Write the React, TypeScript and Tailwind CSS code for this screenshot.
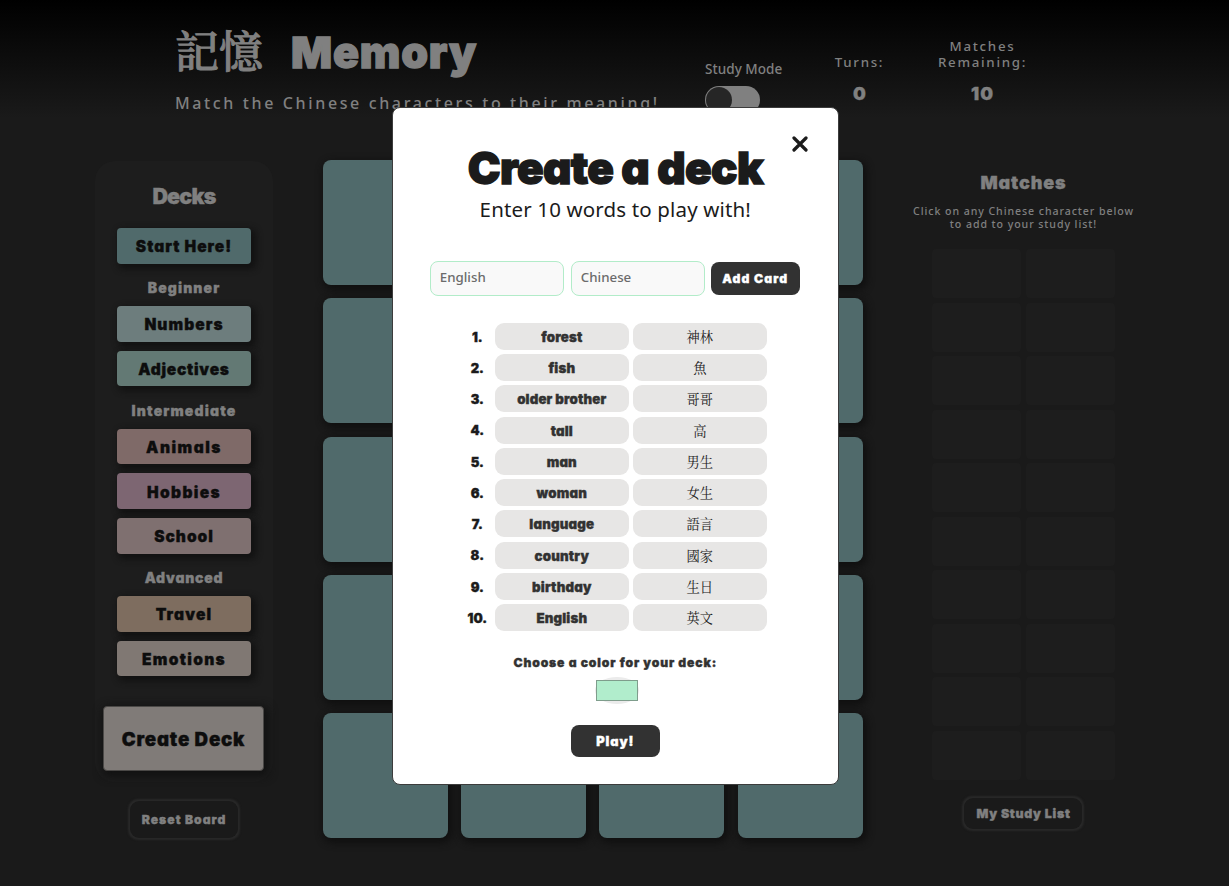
import React from "react";

const heavy =
  "font-['Inter','Noto_Sans_CJK_TC',sans-serif] font-black [font-feature-settings:'cv11'] [-webkit-text-stroke:0.35px_currentColor] whitespace-nowrap";
const round = "font-['Noto_Sans','Noto_Sans_CJK_TC',sans-serif] font-medium";

type Deck = { name: string; cls: string };
const groups: { label: string; labelCls: string; decks: Deck[] }[] = [
  {
    label: "Beginner",
    labelCls: "tracking-[1.1px]",
    decks: [
      { name: "Numbers", cls: "bg-[#6d7d7d] tracking-[1.05px]" },
      { name: "Adjectives", cls: "bg-[#637974] tracking-[0.75px]" },
    ],
  },
  {
    label: "Intermediate",
    labelCls: "tracking-[1.15px]",
    decks: [
      { name: "Animals", cls: "bg-[#7f6a68] tracking-[1.5px]" },
      { name: "Hobbies", cls: "bg-[#7d6672] tracking-[1.4px]" },
      { name: "School", cls: "bg-[#7f7070] tracking-[1px]" },
    ],
  },
  {
    label: "Advanced",
    labelCls: "tracking-[0.75px]",
    decks: [
      { name: "Travel", cls: "bg-[#7e6d5f] tracking-[1.2px]" },
      { name: "Emotions", cls: "bg-[#807873] tracking-[1.3px]" },
    ],
  },
];

const words: [string, string][] = [
  ["forest", "神林"],
  ["fish", "魚"],
  ["older brother", "哥哥"],
  ["tall", "高"],
  ["man", "男生"],
  ["woman", "女生"],
  ["language", "語言"],
  ["country", "國家"],
  ["birthday", "生日"],
  ["English", "英文"],
];

function DeckButton({ name, cls }: Deck) {
  return (
    <button
      className={`${heavy} ${cls} flex h-[35.7px] w-[134px] items-center justify-center rounded-[4px] pt-[2px] text-[15.5px] text-[#0d0d0d] shadow-[3px_3px_6px_2px_#121212]`}
    >
      {name}
    </button>
  );
}

function Header() {
  return (
    <header className="flex h-[160px] pl-[175px] text-[#808080]">
      <div className="w-[530px] pt-[20px]">
        <h1 className="flex h-[64px] items-center whitespace-nowrap">
          <span className="w-[116px] pb-[6px] font-['Noto_Serif_CJK_TC','Noto_Sans_CJK_TC',serif] text-[44px] font-medium leading-none [-webkit-text-stroke:1px_#808080]">
            記憶
          </span>
          <span className={`${heavy} text-[43px] leading-none tracking-[0.8px] [-webkit-text-stroke:1.3px_#808080]`}>
            Memory
          </span>
        </h1>
        <p className={`${round} mt-[7px] whitespace-nowrap text-[16px] leading-[24px] tracking-[2.63px]`}>
          Match the Chinese characters to their meaning!
        </p>
      </div>
      <div className="w-[78px] pt-[59px]">
        <div className={`${round} whitespace-nowrap text-[13.5px] leading-[20px] tracking-[0.05px]`}>Study Mode</div>
        <div className="mt-[7px] h-[28px] w-[55px] rounded-full bg-[#808080] p-px">
          <div className="size-[26px] rounded-full bg-[#262626]" />
        </div>
      </div>
      <div className="w-[153px] pt-[54px] text-center">
        <div className={`${round} text-[13.3px] leading-[16px] tracking-[1.7px]`}>Turns:</div>
        <div className={`${heavy} mt-[14px] text-[18px] leading-[20px]`}>0</div>
      </div>
      <div className="w-[93px] pt-[38px] text-center">
        <div className={`${round} text-[13.3px] leading-[16px] tracking-[1.7px]`}>
          Matches
          <br />
          Remaining:
        </div>
        <div className={`${heavy} mt-[14px] text-[18px] leading-[20px] tracking-[1px]`}>10</div>
      </div>
    </header>
  );
}

function Sidebar() {
  return (
    <aside className="flex w-[178px] flex-col items-center">
      <div className="mt-px flex h-[621px] w-full flex-col items-center rounded-[20px] bg-[#1d1d1d]">
        <h2 className={`${heavy} flex h-[67px] shrink-0 items-center pt-[4px] text-[21.5px] tracking-[-0.8px] text-[#808080]`}>
          Decks
        </h2>
        <DeckButton name="Start Here!" cls="bg-[#506a6b] tracking-[1px]" />
        {groups.map((g) => (
          <React.Fragment key={g.label}>
            <h3
              className={`${heavy} ${g.labelCls} flex h-[42.3px] shrink-0 items-center pt-[5.5px] text-[14px] text-[#808080]`}
            >
              {g.label}
            </h3>
            <div className="flex flex-col gap-[9px]">
              {g.decks.map((d) => (
                <DeckButton key={d.name} {...d} />
              ))}
            </div>
          </React.Fragment>
        ))}
        <button
          className={`${heavy} mt-[30px] mr-px flex h-[65px] w-[161px] shrink-0 items-center justify-center rounded-[4px] border border-[#4a4846] bg-[#807b78] pt-[2px] text-[18.7px] tracking-[0.8px] text-[#0d0d0d] shadow-[2px_3px_8px_3px_#121212]`}
        >
          Create Deck
        </button>
      </div>
      <button
        className={`${heavy} mt-[19px] flex h-[37px] w-[108px] items-center justify-center rounded-[9px] pt-[2px] text-[12.2px] tracking-[1px] text-[#808080] shadow-[0_0_2px_1.5px_#292929]`}
      >
        Reset Board
      </button>
    </aside>
  );
}

function Matches() {
  return (
    <section className="ml-[40.4px] flex w-[241px] flex-col items-center text-[#808080]">
      <h2 className={`${heavy} mt-[11px] text-[18px] leading-[24px] tracking-[0.9px]`}>Matches</h2>
      <p className={`${round} mt-[10px] whitespace-nowrap text-center text-[10.6px] leading-[13px] tracking-[0.93px]`}>
        Click on any Chinese character below
        <br />
        to add to your study list!
      </p>
      <div className="mt-[18px] grid grid-cols-[89px_89px] gap-x-[5px] gap-y-[4.5px]">
        {Array.from({ length: 20 }, (_, i) => (
          <div key={i} className="h-[49px] rounded-[4px] bg-[#1d1d1d]" />
        ))}
      </div>
      <button
        className={`${heavy} mt-[18px] flex h-[31px] w-[118px] items-center justify-center rounded-[9px] pt-[2px] text-[12.4px] tracking-[0.7px] shadow-[0_0_2px_1.5px_#292929]`}
      >
        My Study List
      </button>
    </section>
  );
}

function Modal() {
  const field =
    "h-[35px] w-[134px] rounded-[8px] border border-[#b2ecc9] bg-[#f9f9f9] pb-[3px] pl-[9px] text-[13.3px] placeholder:text-[#6b6b6b] placeholder:opacity-100";
  return (
    <div className="absolute left-[392px] top-[107px] flex h-[678px] w-[446.6px] flex-col items-center rounded-[8px] border border-[#3c3c3c] bg-white text-[#1b1b1b]">
      <button aria-label="Close" className="absolute right-[30px] top-[28px]">
        <svg width="16" height="16" viewBox="0 0 16 16" fill="none" stroke="#1b1b1b" strokeWidth="3.2" strokeLinecap="round">
          <path d="M2 2 14 14M14 2 2 14" />
        </svg>
      </button>
      <h2
        className={`${heavy} mt-[35px] text-[44px] leading-[50px] tracking-[-0.65px] [-webkit-text-stroke:1.4px_#1b1b1b]`}
      >
        Create a deck
      </h2>
      <p className="mt-[2px] whitespace-nowrap font-['Noto_Sans',sans-serif] text-[20.5px] leading-[28px] tracking-[0.15px]">
        Enter 10 words to play with!
      </p>
      <form className="-ml-px mt-[38px] flex w-[370px] items-center">
        <input className={`${round} ${field}`} placeholder="English" />
        <input className={`${round} ${field} ml-[7px]`} placeholder="Chinese" />
        <button
          type="button"
          className={`${heavy} ml-[6px] h-[33px] w-[89px] rounded-[8px] bg-[#323232] pt-px text-[12.2px] tracking-[1.1px] text-white`}
        >
          Add Card
        </button>
      </form>
      <ol className="mt-[27px] flex flex-col gap-[4.22px] pr-[5px]">
        {words.map(([en, zh], i) => (
          <li key={en} className="flex h-[27px] items-center text-[13.3px]">
            <span className={`${heavy} w-[36px] pt-[2px] pl-px text-center text-[13px]`}>{i + 1}.</span>
            <span
              className={`${heavy} flex h-full w-[134px] items-center justify-center rounded-[9px] bg-[#e7e6e5] pt-[3px] tracking-[0.15px] text-[#323232]`}
            >
              {en}
            </span>
            <span className="ml-[4px] flex h-full w-[134px] items-center justify-center rounded-[9px] bg-[#e7e6e5] pt-px font-['Noto_Serif_CJK_TC','Noto_Sans_CJK_TC',serif] font-normal text-[#222222]">
              {zh}
            </span>
          </li>
        ))}
      </ol>
      <p className={`${heavy} mt-[23px] text-[12.2px] leading-[18px] tracking-[0.85px] text-[#323232]`}>
        Choose a color for your deck:
      </p>
      <div className="ml-[3px] mt-[5px] flex h-[27px] w-[44px] items-center justify-center rounded-[50%] bg-[#ebebeb]">
        <div className="h-[21px] w-[42px] shrink-0 border border-[#7f9d8c] bg-[#b1edcc]" />
      </div>
      <button
        className={`${heavy} mt-[21px] h-[32px] w-[89px] rounded-[8px] bg-[#323232] pt-px text-[12.8px] tracking-[0.95px] text-white`}
      >
        Play!
      </button>
    </div>
  );
}

export default function App() {
  return (
    <div className="relative h-[886px] w-[1229px] overflow-hidden bg-[#1a1a1a] bg-[linear-gradient(to_bottom,#000_0,#1a1a1a_118px)]">
      <Header />
      <main className="flex h-[725px] pl-[95px]">
        <Sidebar />
        <div className="ml-[49.6px] grid h-[678.4px] w-[540px] grid-cols-4 grid-rows-5 gap-[13.25px]">
          {Array.from({ length: 20 }, (_, i) => (
            <div key={i} className="rounded-[8px] bg-[#506a6b] shadow-[2px_3px_7px_2px_#101010]" />
          ))}
        </div>
        <Matches />
      </main>
      <Modal />
    </div>
  );
}
